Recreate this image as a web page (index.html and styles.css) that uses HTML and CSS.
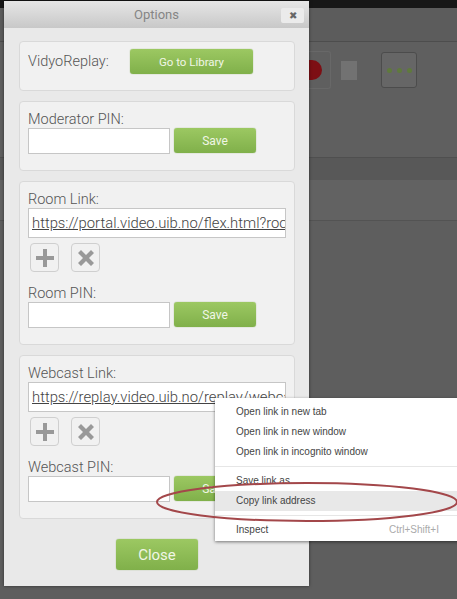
FILE: index.html
```html
<!DOCTYPE html>
<html lang="en">
  <head>
    <meta charset="UTF-8" />
    <title>Options</title>
    <link rel="stylesheet" href="styles.css">
  </head>
  <body>
    <div id="page">
      <div class="top-bar"></div>
      <div class="header-band"></div>
      <div class="toolbar">
        <div class="tool-box">
          <span class="rec-dot"></span>
        </div>
        <span class="stop-square"></span>
        <div class="more-box">
          <span class="more-dot"></span>
          <span class="more-dot"></span>
          <span class="more-dot"></span>
        </div>
      </div>
      <div class="strip-dark"></div>
      <div class="strip-light"></div>
      <div class="page-rest"></div>

      <div id="dialog">
        <div class="dialog-title">
          <span>Options</span>
          <button class="close-x">&#10006;</button>
        </div>
        <div class="dialog-body">
          <div class="panel panel-replay">
            <label>VidyoReplay:</label>
            <button class="green library">Go to Library</button>
          </div>

          <div class="panel panel-pin">
            <label>Moderator PIN:</label>
            <div class="pin-row">
              <input type="text" />
              <button class="green save">Save</button>
            </div>
          </div>

          <div class="panel panel-link">
            <label>Room Link:</label>
            <div class="link-box"><a>https://portal.video.uib.no/flex.html?roomdirect</a></div>
            <div class="icon-row">
              <button class="icon-btn">
                <svg width="20" height="20" viewBox="0 0 20 20"><path d="M8 1h4v7h7v4h-7v7H8v-7H1V8h7z" /></svg>
              </button>
              <button class="icon-btn">
                <svg width="20" height="20" viewBox="0 0 20 20"><path d="M5 2l5 5 5-5 3 3-5 5 5 5-3 3-5-5-5 5-3-3 5-5-5-5z" /></svg>
              </button>
            </div>
            <label>Room PIN:</label>
            <div class="pin-row">
              <input type="text" />
              <button class="green save">Save</button>
            </div>
          </div>

          <div class="panel panel-link">
            <label>Webcast Link:</label>
            <div class="link-box"><a>https://replay.video.uib.no/replay/webcast/direct</a></div>
            <div class="icon-row">
              <button class="icon-btn">
                <svg width="20" height="20" viewBox="0 0 20 20"><path d="M8 1h4v7h7v4h-7v7H8v-7H1V8h7z" /></svg>
              </button>
              <button class="icon-btn">
                <svg width="20" height="20" viewBox="0 0 20 20"><path d="M5 2l5 5 5-5 3 3-5 5 5 5-3 3-5-5-5 5-3-3 5-5-5-5z" /></svg>
              </button>
            </div>
            <label>Webcast PIN:</label>
            <div class="pin-row">
              <input type="text" />
              <button class="green save">Save</button>
            </div>
          </div>

          <button class="green close-btn">Close</button>
        </div>
      </div>

      <div id="context-menu">
        <div class="menu-item">Open link in new tab</div>
        <div class="menu-item">Open link in new window</div>
        <div class="menu-item">Open link in incognito window</div>
        <div class="menu-sep"></div>
        <div class="menu-item">Save link as...</div>
        <div class="menu-item active">Copy link address</div>
        <div class="menu-sep"></div>
        <div class="menu-item">Inspect<span class="shortcut">Ctrl+Shift+I</span></div>
      </div>

      <svg id="oval" width="310" height="50" viewBox="0 0 310 50">
        <ellipse cx="155" cy="25" rx="150" ry="19" />
      </svg>
    </div>
  </body>
</html>
```

FILE: styles.css
```css
body {
  margin: 0;
  padding: 0;
  overflow: hidden;
  font-family: "Roboto", "Liberation Sans", sans-serif;
  font-weight: 300;
}

#page {
  position: relative;
  width: 457px;
  height: 599px;
  overflow: hidden;
  background-color: #5f5f5f;
}

.top-bar {
  height: 8px;
  background-color: #171717;
}

.header-band {
  height: 33px;
  background-color: #5c5c5c;
  border-bottom: 1px solid #4d4d4d;
}

.toolbar {
  display: flex;
  align-items: center;
  height: 115px;
  padding-left: 300px;
  box-sizing: border-box;
  padding-bottom: 59px;
  background-color: #5f5f5f;
}

.tool-box {
  width: 30px;
  height: 36px;
  display: flex;
  align-items: center;
  border-radius: 3px;
  border: 1px solid #686868;
  border-left: 0;
}

.rec-dot {
  width: 22px;
  height: 20px;
  border-radius: 0 10px 10px 0;
  background-color: #7d0f14;
}

.stop-square {
  width: 16px;
  height: 19px;
  margin-left: 10px;
  background-color: #727272;
}

.more-box {
  box-sizing: border-box;
  display: flex;
  align-items: center;
  justify-content: center;
  gap: 5px;
  width: 36px;
  height: 36px;
  margin-left: 24px;
  border-radius: 3px;
  border: 1px solid #4c4c4c;
  background-color: #666;
}

.more-dot {
  width: 5px;
  height: 5px;
  border-radius: 50%;
  background-color: #5f7a3c;
}

.strip-dark {
  height: 22px;
  background-color: #585858;
  border-top: 1px solid #4f4f4f;
}

.strip-light {
  height: 40px;
  background-color: #626262;
}

.page-rest {
  height: 378px;
  background-color: #5e5e5e;
  border-top: 1px solid #535353;
}

#dialog {
  position: absolute;
  left: 4px;
  top: 1px;
  width: 305px;
  height: 585px;
  background-color: #e9e9e9;
  box-shadow: 0 0 3px rgba(0, 0, 0, 0.5);
  color: #555;
}

.dialog-title {
  position: relative;
  height: 27px;
  line-height: 28px;
  text-align: center;
  font-size: 13px;
  font-weight: 400;
  color: #858585;
  background: linear-gradient(#e6e6e6, #c8c8c8);
}

.close-x {
  position: absolute;
  right: 5px;
  top: 7px;
  width: 23px;
  height: 15px;
  padding: 0;
  border: 0;
  border-radius: 2px;
  background-color: #ebebeb;
  color: #666;
  font-size: 10px;
  line-height: 15px;
}

.dialog-body {
  display: flex;
  flex-direction: column;
  padding: 13px 14px 0 15px;
}

.panel {
  box-sizing: border-box;
  padding: 0 8px;
  margin-bottom: 10px;
  border: 1px solid #d9d9d9;
  border-radius: 4px;
  background-color: #f1f1f1;
}

.panel label {
  display: block;
  font-size: 14.5px;
  line-height: 18px;
  margin-bottom: -1px;
  color: #555;
}

.panel-replay {
  display: flex;
  align-items: flex-start;
  height: 50px;
  padding-top: 7px;
}

.panel-replay label {
  width: 102px;
  line-height: 26px;
}

.panel-pin {
  height: 70px;
  padding-top: 9px;
}

.panel-link {
  height: 164px;
  padding-top: 9px;
}

.green {
  border: 0;
  padding: 0;
  border-radius: 3px;
  color: #f0f6e6;
  font-family: "Roboto", "Liberation Sans", sans-serif;
  background: linear-gradient(#9cc862, #80b04a);
  box-shadow: 0 0 1px #6f9a3f;
}

.library {
  width: 123px;
  height: 25px;
  font-size: 11.5px;
}

.pin-row {
  display: flex;
  gap: 4px;
}

.pin-row input {
  box-sizing: border-box;
  width: 142px;
  height: 26px;
  margin: 0;
  border: 1px solid #c6c6c6;
  background-color: #fff;
}

.save {
  width: 82px;
  height: 25px;
  font-size: 12px;
}

.link-box {
  box-sizing: border-box;
  width: 258px;
  height: 30px;
  padding: 0 0 0 3px;
  border: 1px solid #c6c6c6;
  background-color: #fff;
  overflow: hidden;
  white-space: nowrap;
  font-size: 14.8px;
  font-weight: 300;
  line-height: 29px;
}

.link-box a {
  color: #444;
  text-decoration: underline;
}

.icon-row {
  display: flex;
  gap: 12px;
  padding: 5px 0 13px 2px;
}

.icon-btn {
  display: flex;
  align-items: center;
  justify-content: center;
  width: 29px;
  height: 29px;
  padding: 0;
  border: 1px solid #cfcfcf;
  border-radius: 4px;
  background-color: #f1f1f1;
}

.icon-btn svg {
  fill: #999;
}

.close-btn {
  align-self: center;
  width: 82px;
  height: 31px;
  margin-top: 10px;
  font-size: 15px;
}

#context-menu {
  position: absolute;
  left: 215px;
  top: 398px;
  width: 250px;
  height: 143px;
  padding-top: 4px;
  box-sizing: border-box;
  background-color: #fff;
  box-shadow: 0 1px 3px rgba(0, 0, 0, 0.5);
  font-family: "Liberation Sans", sans-serif;
  font-weight: 400;
  font-size: 10px;
  color: #444;
}

.menu-item {
  display: flex;
  justify-content: space-between;
  height: 20px;
  line-height: 20px;
  padding: 0 18px 0 21px;
}

.menu-item.active {
  background-color: #e8e8e8;
}

.shortcut {
  color: #aaa;
  margin-right: 8px;
}

.menu-sep {
  height: 1px;
  margin: 4px 0;
  background-color: #e6e6e6;
}

#oval {
  position: absolute;
  left: 152px;
  top: 477px;
}

#oval ellipse {
  fill: none;
  stroke: #a3474a;
  stroke-width: 2;
}
```
